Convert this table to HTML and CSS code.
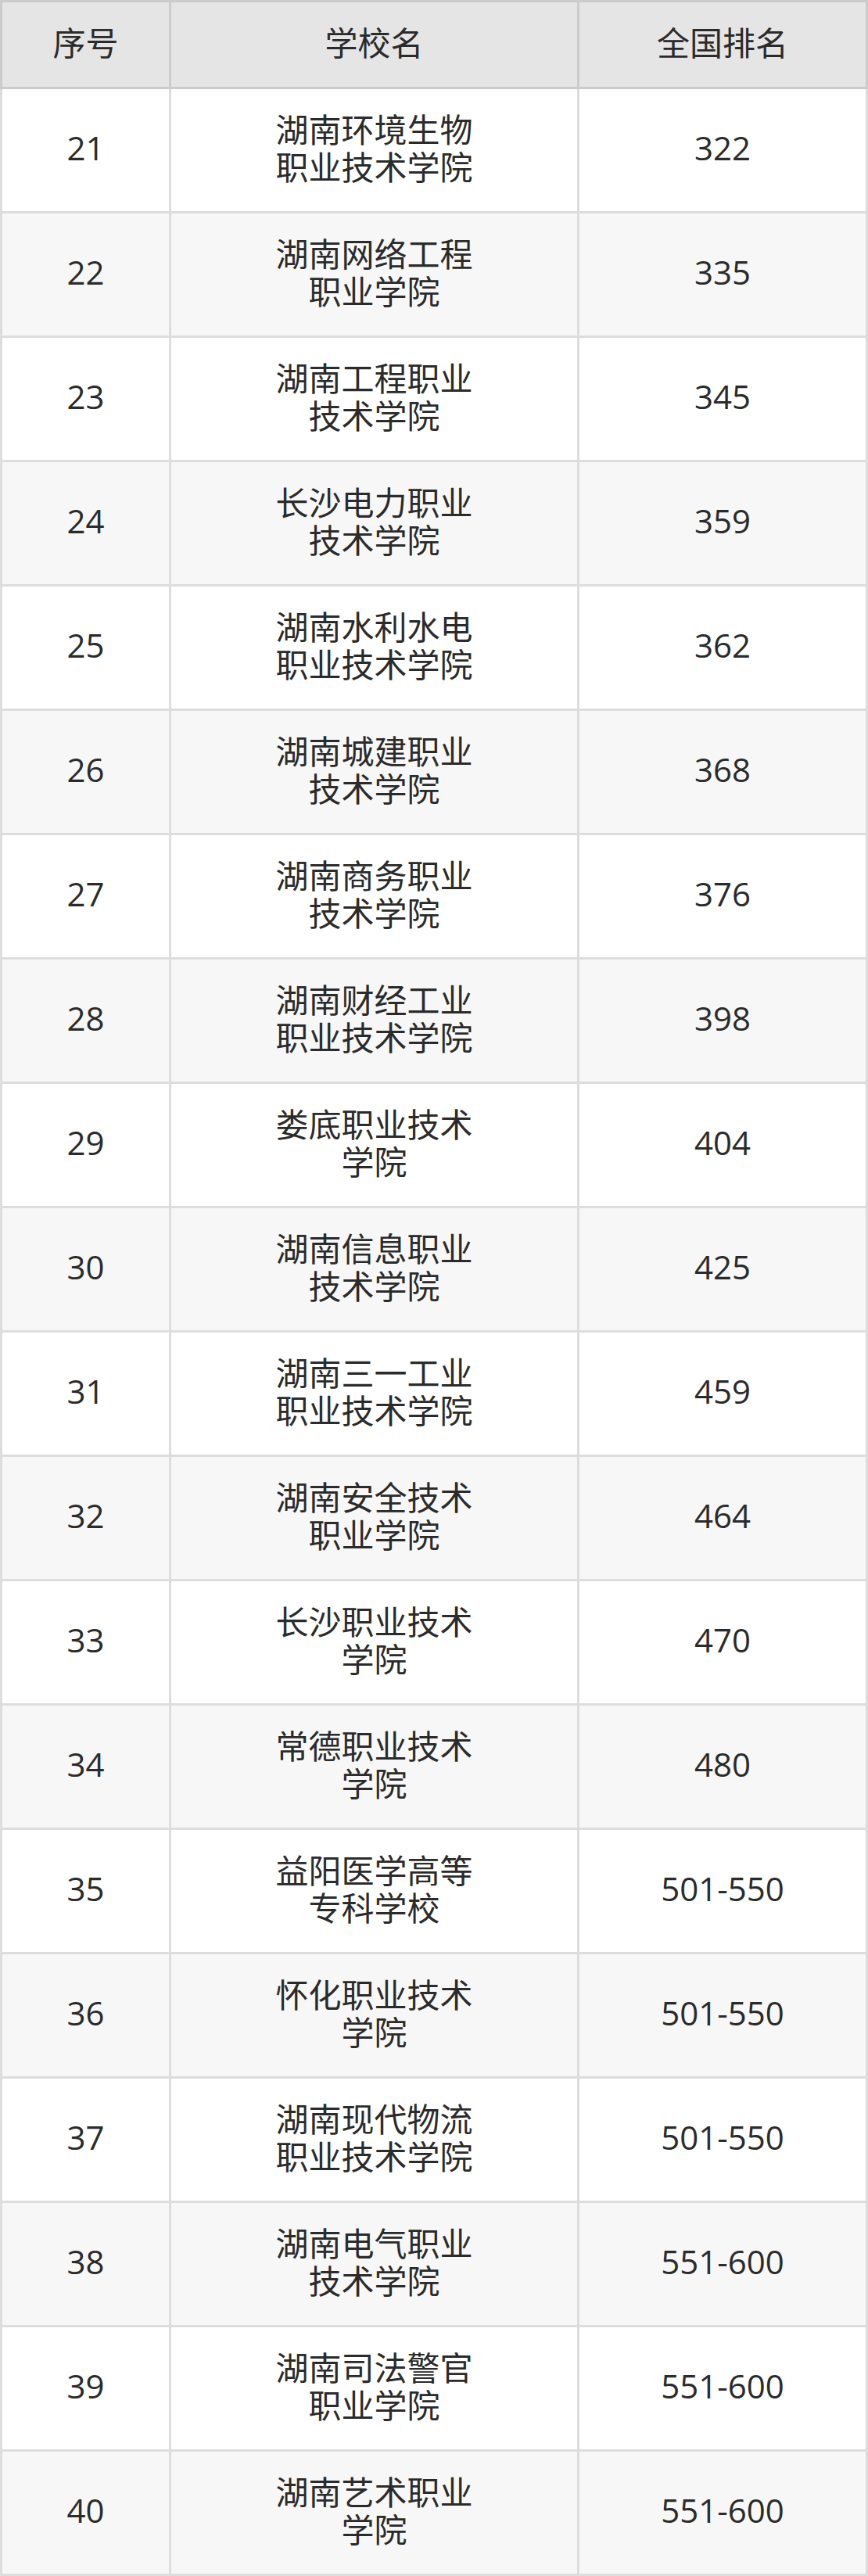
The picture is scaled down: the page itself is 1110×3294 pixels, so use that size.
FILE: index.html
```html
<!DOCTYPE html>
<html lang="zh-CN">
<head>
<meta charset="utf-8">
<title>排名</title>
<link rel="stylesheet" href="styles.css">
</head>
<body>
<table class="rank">
  <thead>
    <tr><th class="c1">序号</th><th class="c2">学校名</th><th class="c3">全国排名</th></tr>
  </thead>
  <tbody>
    <tr><td class="num">21</td><td><div class="name">湖南环境生物职业技术学院</div></td><td class="num">322</td></tr>
    <tr><td class="num">22</td><td><div class="name">湖南网络工程职业学院</div></td><td class="num">335</td></tr>
    <tr><td class="num">23</td><td><div class="name">湖南工程职业技术学院</div></td><td class="num">345</td></tr>
    <tr><td class="num">24</td><td><div class="name">长沙电力职业技术学院</div></td><td class="num">359</td></tr>
    <tr><td class="num">25</td><td><div class="name">湖南水利水电职业技术学院</div></td><td class="num">362</td></tr>
    <tr><td class="num">26</td><td><div class="name">湖南城建职业技术学院</div></td><td class="num">368</td></tr>
    <tr><td class="num">27</td><td><div class="name">湖南商务职业技术学院</div></td><td class="num">376</td></tr>
    <tr><td class="num">28</td><td><div class="name">湖南财经工业职业技术学院</div></td><td class="num">398</td></tr>
    <tr><td class="num">29</td><td><div class="name">娄底职业技术学院</div></td><td class="num">404</td></tr>
    <tr><td class="num">30</td><td><div class="name">湖南信息职业技术学院</div></td><td class="num">425</td></tr>
    <tr><td class="num">31</td><td><div class="name">湖南三一工业职业技术学院</div></td><td class="num">459</td></tr>
    <tr><td class="num">32</td><td><div class="name">湖南安全技术职业学院</div></td><td class="num">464</td></tr>
    <tr><td class="num">33</td><td><div class="name">长沙职业技术学院</div></td><td class="num">470</td></tr>
    <tr><td class="num">34</td><td><div class="name">常德职业技术学院</div></td><td class="num">480</td></tr>
    <tr><td class="num">35</td><td><div class="name">益阳医学高等专科学校</div></td><td class="num">501-550</td></tr>
    <tr><td class="num">36</td><td><div class="name">怀化职业技术学院</div></td><td class="num">501-550</td></tr>
    <tr><td class="num">37</td><td><div class="name">湖南现代物流职业技术学院</div></td><td class="num">501-550</td></tr>
    <tr><td class="num">38</td><td><div class="name">湖南电气职业技术学院</div></td><td class="num">551-600</td></tr>
    <tr><td class="num">39</td><td><div class="name">湖南司法警官职业学院</div></td><td class="num">551-600</td></tr>
    <tr><td class="num">40</td><td><div class="name">湖南艺术职业学院</div></td><td class="num">551-600</td></tr>
  </tbody>
</table>
</body>
</html>
```
FILE: styles.css
```css
html, body {
  margin: 0;
  padding: 0;
  background: #ffffff;
}

.rank {
  width: 1110px;
  table-layout: fixed;
  border-collapse: separate;
  border-spacing: 0;
  font-family: "Open Sans", "Noto Sans CJK SC", sans-serif;
  font-size: 42px;
  line-height: 48px;
  color: #2b2b2b;
}

.rank th,
.rank td {
  padding: 0 0 4px 0;
  text-align: center;
  vertical-align: middle;
  font-weight: normal;
}

.rank th {
  height: 104px;
  background: #e5e5e5;
  border-top: 3px solid #cccccc;
  border-bottom: 3px solid #cccccc;
  border-right: 3px solid #cccccc;
}

.rank th.c1 {
  width: 213px;
  border-left: 3px solid #cccccc;
}

.rank th.c2 {
  width: 519px;
}

.rank th.c3 {
  width: 366px;
}

.rank td {
  height: 152px;
  border-right: 3px solid #dddddd;
  border-bottom: 3px solid #dddddd;
}

.rank td.num {
  padding-bottom: 7px;
  height: 149px;
}

.rank td:first-child {
  border-left: 3px solid #dddddd;
}

.rank tbody tr:nth-child(even) td {
  background: #f7f7f7;
}

.name {
  max-width: 6.2em;
  margin: 0 auto;
}
```
